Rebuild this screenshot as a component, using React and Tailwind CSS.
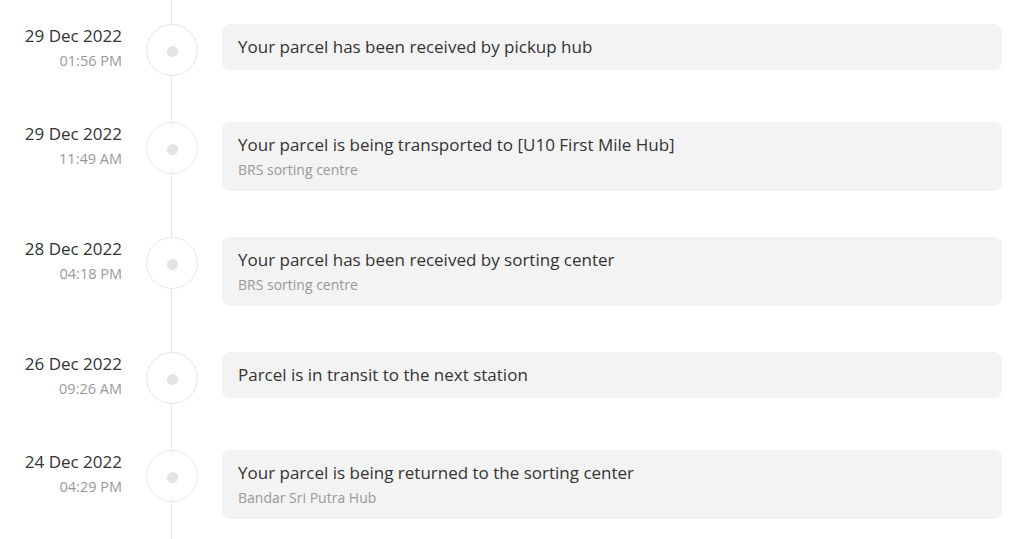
const events = [
  { date: "29 Dec 2022", time: "01:56 PM", title: "Your parcel has been received by pickup hub" },
  { date: "29 Dec 2022", time: "11:49 AM", title: "Your parcel is being transported to [U10 First Mile Hub]", sub: "BRS sorting centre" },
  { date: "28 Dec 2022", time: "04:18 PM", title: "Your parcel has been received by sorting center", sub: "BRS sorting centre" },
  { date: "26 Dec 2022", time: "09:26 AM", title: "Parcel is in transit to the next station" },
  { date: "24 Dec 2022", time: "04:29 PM", title: "Your parcel is being returned to the sorting center", sub: "Bandar Sri Putra Hub" },
];

const App = () => {
  return (
    <div className="min-h-screen bg-white font-['Open_Sans',sans-serif] text-[#333]">
      {events.map((ev, i) => (
        <div key={i} className="relative flex items-start pt-6 pb-[22px] pr-[22px]">
          {/* línea vertical */}
          <div className="absolute inset-y-0 left-[171px] w-px bg-[#e6e6e6]"></div>

          {/* fecha y hora */}
          <div className="w-[122px] shrink-0 text-right">
            <div className="text-[17px] leading-6 text-[#333]">{ev.date}</div>
            <div className="mt-[3px] text-[14.5px] leading-5 text-[#999]">{ev.time}</div>
          </div>

          {/* punto */}
          <div className="relative mx-6 flex h-[52px] w-[52px] shrink-0 items-center justify-center rounded-full border border-[#e8e8e8] bg-white">
            <div className="mt-[3px] h-[11px] w-[11px] rounded-full bg-[#e3e3e3]"></div>
          </div>

          {/* tarjeta */}
          <div className="flex-1 rounded-lg bg-[#f3f3f3] px-4 py-[11px]">
            <div className="text-[17px] leading-6 text-[#333]">{ev.title}</div>
            {ev.sub && <div className="mt-[3px] text-[14px] leading-5 text-[#999]">{ev.sub}</div>}
          </div>
        </div>
      ))}
    </div>
  );
};

export default App;
